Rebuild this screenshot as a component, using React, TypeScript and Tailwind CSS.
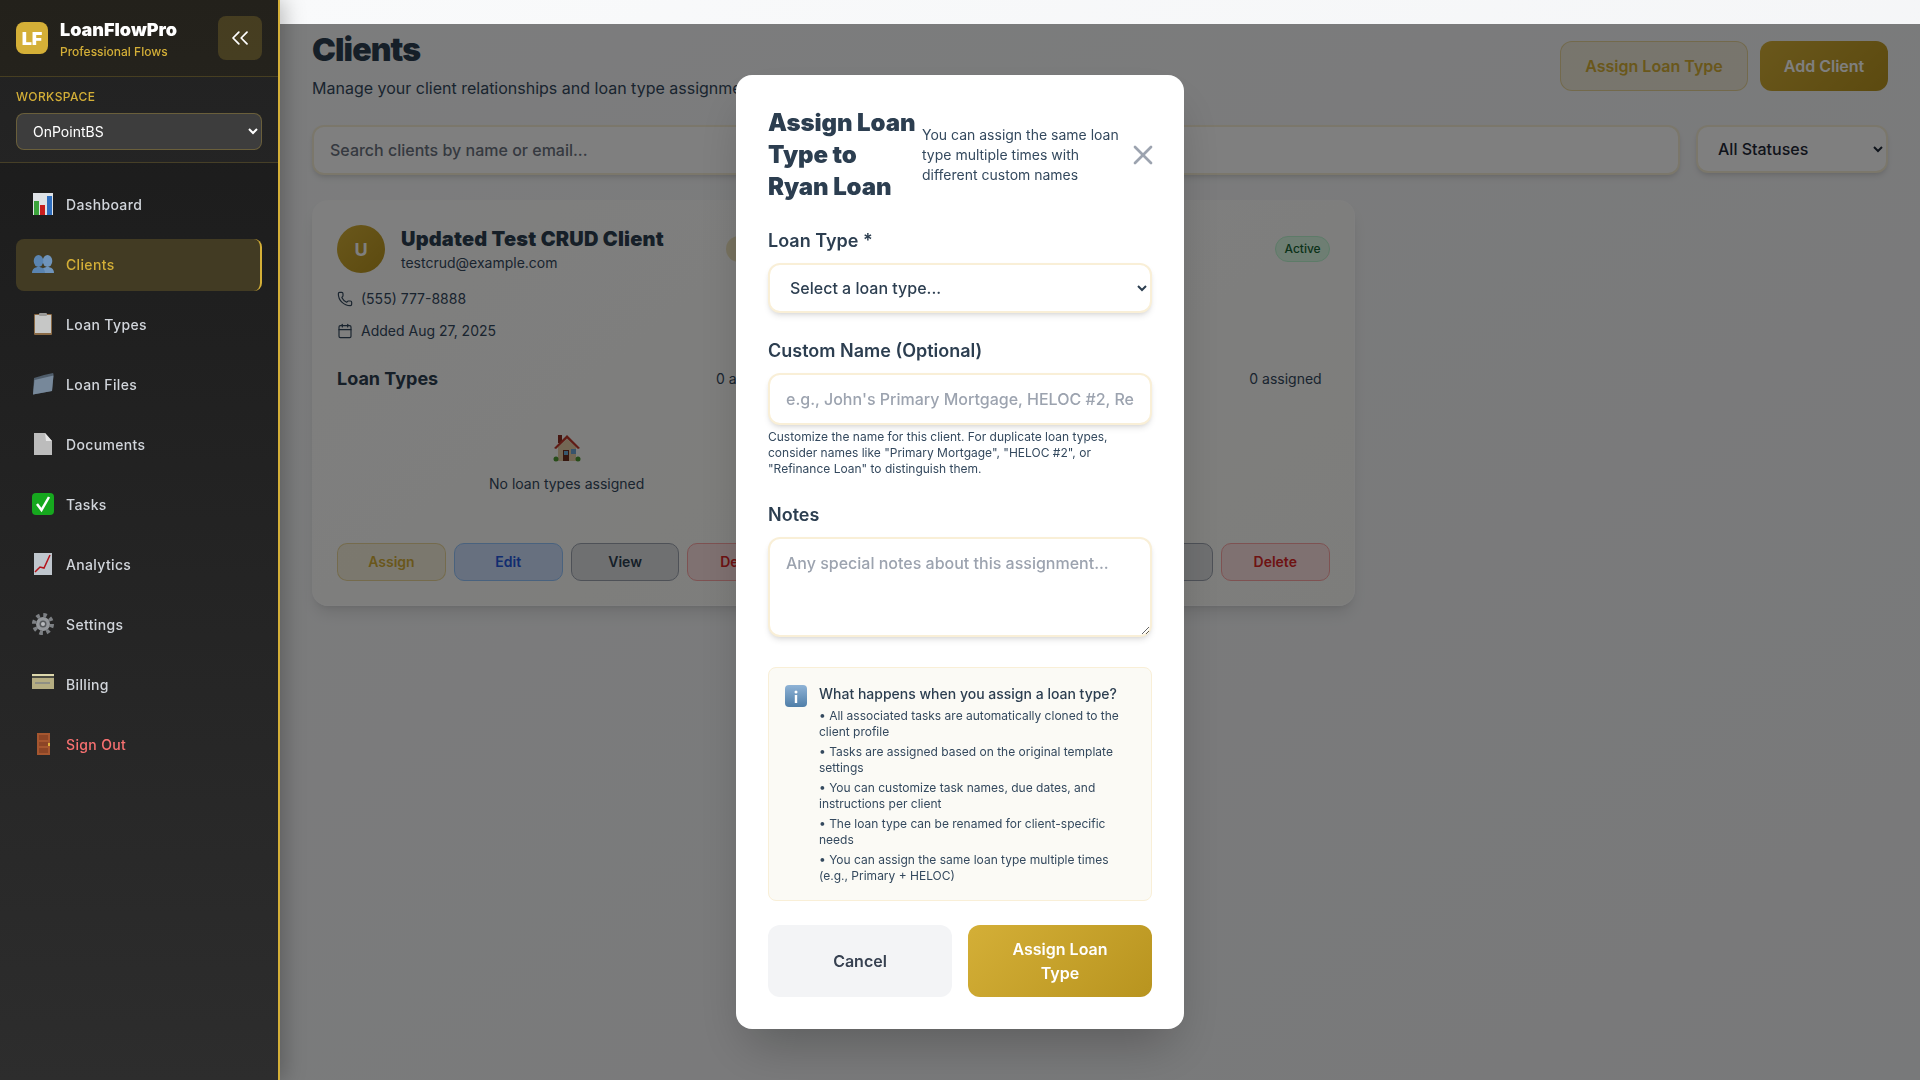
import { Calendar, ChevronsLeft, Phone, X } from 'lucide-react'
import React from 'react'

const DashboardIcon = () => (
  <svg viewBox="0 0 22 22" className="h-[22px] w-[22px]">
    <rect x="1" y="0" width="20" height="22" fill="#dfe3e7" />
    <rect x="2" y="8" width="5" height="14" fill="#3ba33b" />
    <rect x="8" y="12" width="5" height="10" fill="#c81e1e" />
    <rect x="15" y="3" width="5" height="19" fill="#2f6fc0" />
  </svg>
)

const ClientsIcon = () => (
  <svg viewBox="0 0 22 22" className="h-[22px] w-[22px]">
    <g fill="#6f94bb">
      <ellipse cx="15.5" cy="8" rx="4.8" ry="6" />
      <path d="M9 20c0-4 3-6 6.500-6s6.500 2 6.500 6z" />
    </g>
    <g fill="#5a84b0">
      <ellipse cx="6.500" cy="8" rx="4.800" ry="6" />
      <path d="M0 20c0-4 3-6 6.500-6s6.500 2 6.500 6z" />
    </g>
  </svg>
)

const ClipboardIcon = () => (
  <svg viewBox="0 0 22 22" className="h-[22px] w-[22px]">
    <rect x="2" y="1" width="18" height="21" rx="1" fill="#8a6a45" />
    <rect x="3" y="2" width="16" height="18" fill="#c6c7c6" />
    <rect x="7" y="0" width="8" height="3" rx="1" fill="#9a9a98" />
  </svg>
)

const FolderIcon = () => (
  <svg viewBox="0 0 22 22" className="h-[22px] w-[22px]">
    <path d="M2 5 L12 2 L21 0 L21.500 1 L20 18 L1 21.500 Z" fill="#4f5d6b" />
    <path d="M2.500 7 L21.500 2.500 L20 18 L1 21.500 Z" fill="#77889a" />
  </svg>
)

const DocumentIcon = () => (
  <svg viewBox="0 0 22 22" className="h-[22px] w-[22px]">
    <path d="M2 0 H13 L20 8 V22 H2 Z" fill="#bcbcbc" />
    <path d="M13 0 L20 8 H14 Z" fill="#e6e6e6" />
  </svg>
)

const CheckIcon = () => (
  <svg viewBox="0 0 22 22" className="h-[22px] w-[22px]">
    <rect x="0" y="0" width="22" height="22" rx="4" fill="#16a81e" />
    <path d="M5 11 L9.500 17 L17 4" fill="none" stroke="#fff" strokeWidth="2.500" />
  </svg>
)

const AnalyticsIcon = () => (
  <svg viewBox="0 0 22 22" className="h-[22px] w-[22px]">
    <rect x="2" y="0" width="18" height="22" fill="#bfc6cd" />
    <path d="M3 19 L8 14 L12 15 L18 2" fill="none" stroke="#b3131b" strokeWidth="1.500" />
  </svg>
)

const GearIcon = () => (
  <svg viewBox="0 0 22 22" className="h-[22px] w-[22px]">
    <circle cx="11" cy="11" r="9" fill="none" stroke="#7d8084" strokeWidth="4" strokeDasharray="3.500 3.570" />
    <circle cx="11" cy="11" r="7" fill="#94979b" />
    <circle cx="11" cy="11" r="3.500" fill="#55585b" />
    <circle cx="11" cy="11" r="2" fill="#b9bbbe" />
  </svg>
)

const BillingIcon = () => (
  <svg viewBox="0 0 22 22" className="h-[22px] w-[22px]">
    <rect x="0" y="1" width="22" height="2" fill="#ddd8ac" />
    <rect x="0" y="3" width="22" height="2" fill="#4a4a40" />
    <rect x="0" y="5" width="22" height="11" fill="#b5ad82" />
    <rect x="3" y="9" width="15" height="2" fill="#8f8f84" />
  </svg>
)

const DoorIcon = () => (
  <svg viewBox="0 0 22 22" className="h-[22px] w-[22px]">
    <rect x="5" y="0" width="13" height="22" fill="#a5562f" />
    <rect x="7" y="2" width="9" height="5" fill="#8c4526" />
    <rect x="7" y="9" width="9" height="4" fill="#8c4526" />
    <rect x="7" y="15" width="9" height="5" fill="#8c4526" />
    <rect x="16" y="10" width="2" height="3" fill="#e0b23c" />
  </svg>
)

const HouseIcon = () => (
  <svg viewBox="0 0 28 28" className="h-[28px] w-[28px]">
    <rect x="5" y="1" width="4" height="8" fill="#8c2f23" />
    <path d="M5 13 L14 5 L23 13 V27 H5 Z" fill="#e6cfa8" />
    <path d="M1 14 L14 1 L27 14 L25 15 L14 4.500 L3 15 Z" fill="#c0392b" />
    <rect x="10" y="16" width="6" height="11" fill="#6d2e1f" />
    <rect x="11" y="17" width="4" height="4" fill="#6fb1dc" />
    <rect x="18" y="15" width="5" height="5" fill="#6fa6d6" />
    <circle cx="3" cy="25" r="2.500" fill="#4f9a32" />
    <circle cx="25" cy="25" r="2.500" fill="#4f9a32" />
  </svg>
)

const InfoIcon = () => (
  <svg viewBox="0 0 22 22" className="h-[22px] w-[22px]">
    <defs>
      <linearGradient id="infoFill" x1="0" y1="0" x2="0" y2="1">
        <stop offset="0" stopColor="#8fb3d6" />
        <stop offset="1" stopColor="#4f7ea8" />
      </linearGradient>
    </defs>
    <rect width="22" height="22" rx="4" fill="url(#infoFill)" />
    <circle cx="11" cy="7" r="1.500" fill="#fff" />
    <rect x="9.800" y="10" width="2.400" height="8" fill="#fff" />
  </svg>
)

const navItems = [
  { label: 'Dashboard', icon: <DashboardIcon /> },
  { label: 'Clients', icon: <ClientsIcon />, active: true },
  { label: 'Loan Types', icon: <ClipboardIcon /> },
  { label: 'Loan Files', icon: <FolderIcon /> },
  { label: 'Documents', icon: <DocumentIcon /> },
  { label: 'Tasks', icon: <CheckIcon /> },
  { label: 'Analytics', icon: <AnalyticsIcon /> },
  { label: 'Settings', icon: <GearIcon /> },
  { label: 'Billing', icon: <BillingIcon /> },
  { label: 'Sign Out', icon: <DoorIcon />, danger: true },
]

const infoLines = [
  'All associated tasks are automatically cloned to the client profile',
  'Tasks are assigned based on the original template settings',
  'You can customize task names, due dates, and instructions per client',
  'The loan type can be renamed for client-specific needs',
  'You can assign the same loan type multiple times (e.g., Primary + HELOC)',
]

const Sidebar = () => (
  <aside className="relative z-20 flex h-screen w-[280px] shrink-0 flex-col border-r-2 border-[#d4af37] bg-gradient-to-b from-[#1a1a1a] to-[#2d2d2d] shadow-[4px_0_20px_rgba(0,0,0,0.25)]">
    <div className="flex h-[77px] items-center justify-between border-b border-[#d4af37]/20 bg-[#d4af37]/5 pl-4 pr-4">
      <div className="flex items-center gap-3">
        <div className="flex h-8 w-8 items-center justify-center rounded-lg bg-[#d4af37] text-[18px] font-black text-white">
          LF
        </div>
        <div className="pt-[2px]">
          <div className="text-[18px] leading-[24px] font-black text-white">LoanFlowPro</div>
          <div className="mt-[2px] text-[12px] leading-[16px] font-medium text-[#d4af37]">Professional Flows</div>
        </div>
      </div>
      <button className="flex h-11 w-11 items-center justify-center rounded-lg bg-[#d4af37]/20 text-white">
        <ChevronsLeft size={28} strokeWidth={1.5} />
      </button>
    </div>
    <div className="flex h-[86px] flex-col border-b border-[#d4af37]/20 bg-white/[0.03] px-4 pt-[12px]">
      <div className="mb-[8px] text-[12px] leading-[16px] font-medium tracking-[0.4px] text-[#d4af37]">WORKSPACE</div>
      <select className="h-[37px] w-full rounded-lg border border-[#d4af37]/30 bg-[#3d3d3d] px-3 text-[14px] text-white">
        <option>OnPointBS</option>
      </select>
    </div>
    <nav className="flex flex-col gap-2 px-4 pt-4">
      {navItems.map((item) => (
        <div
          key={item.label}
          className={
            item.active
              ? 'flex h-[52px] items-center gap-3 rounded-lg border-r-2 border-[#d4af37] bg-[#d4af37]/20 px-4 pb-[2px] text-[14px] font-medium tracking-[0.35px] text-[#d4af37]'
              : item.danger
                ? 'flex h-[52px] items-center gap-3 rounded-lg px-4 pb-[2px] text-[14px] font-medium tracking-[0.35px] text-[#f87171]'
                : 'flex h-[52px] items-center gap-3 rounded-lg px-4 pb-[2px] text-[14px] font-medium tracking-[0.35px] text-[#d1d5db]'
          }
        >
          {item.icon}
          <span>{item.label}</span>
        </div>
      ))}
    </nav>
  </aside>
)

const ClientCard = ({ name, email, phone, added, initial, pill }: any) => (
  <div className="rounded-2xl border border-white/60 bg-gradient-to-br from-white to-[#fbfbf7] p-6 shadow-lg">
    <div className="flex items-center justify-between">
      <div className="flex items-center gap-4">
        <div className="flex h-12 w-12 items-center justify-center rounded-full bg-[linear-gradient(135deg,#d4af37,#b8941f)] text-[18px] font-bold text-white">
          {initial}
        </div>
        <div>
          <div className="text-[20px] leading-[28px] font-black tracking-[0.2px] text-[#2c3e50]">{name}</div>
          <div className="text-[14px] leading-[20px] text-[#34495e]">{email}</div>
        </div>
      </div>
      <div className="flex items-center">
        {pill && <div className="h-[26px] w-[16px] rounded-l-full bg-[#d4af37]/30" />}
        <div className="flex h-[26px] items-center rounded-full border border-[#bbf7d0] bg-[#dcfce7] px-[8px] text-[12px] font-medium text-[#166534]">
          Active
        </div>
      </div>
    </div>
    <div className="mt-4 flex items-center gap-2 text-[14px] leading-[20px] text-[#34495e]">
      <Phone size={16} strokeWidth={1.75} />
      {phone}
    </div>
    <div className="mt-3 flex items-center gap-2 text-[14px] leading-[20px] text-[#34495e]">
      <Calendar size={16} strokeWidth={1.75} />
      {added}
    </div>
    <div className="mt-6 flex items-center justify-between pr-2">
      <div className="text-[18px] leading-[28px] font-bold text-[#2c3e50]">Loan Types</div>
      <div className="text-[14px] leading-[20px] text-[#34495e]">0 assigned</div>
    </div>
    <div className="mt-[41px] flex flex-col items-center">
      <HouseIcon />
      <div className="mt-3 text-[14px] leading-[20px] text-[#34495e]">No loan types assigned</div>
    </div>
    <div className="mt-[49px] flex gap-2 text-[14px] font-semibold">
      <button className="h-[38px] flex-1 rounded-[10px] border border-[#d4af37]/40 bg-[#d4af37]/15 pb-[1px] text-[#d4af37]">Assign</button>
      <button className="h-[38px] flex-1 rounded-[10px] border border-[#93c5fd] bg-[#cfe0ff] pb-[1px] text-[#2358e0]">Edit</button>
      <button className="h-[38px] flex-1 rounded-[10px] border border-[#9ca3af] bg-[#dfe1e3] pb-[1px] text-[#2c3e50]">View</button>
      <button className="h-[38px] flex-1 rounded-[10px] border border-[#fca5a5] bg-[#fee2e2] pb-[1px] text-[#dc2626]">Delete</button>
    </div>
  </div>
)

const Main = () => (
  <main className="min-w-0 flex-1 bg-gradient-to-br from-[#f9fafb] to-[#f1f2f4] px-8 pt-[30px]">
    <div className="flex items-center justify-between">
      <div>
        <h1 className="text-[32px] leading-[40px] font-black tracking-[-0.9px] text-[#2c3e50]">Clients</h1>
        <p className="mt-[6px] text-[16px] leading-[24px] text-[#34495e]">
          Manage your client relationships and loan type assignments
        </p>
      </div>
      <div className="mt-[2px] flex gap-3 text-[16px] font-semibold">
        <button className="h-[50px] w-[188px] rounded-xl border border-[#d4af37]/40 bg-[#d4af37]/15 text-[#d4af37]">
          Assign Loan Type
        </button>
        <button className="h-[50px] w-[128px] rounded-xl bg-[linear-gradient(135deg,#d4af37,#b8941f)] text-white">
          Add Client
        </button>
      </div>
    </div>
    <div className="mt-[25px] flex items-start gap-4">
      <input
        className="h-[50px] flex-1 rounded-xl border-2 border-[#d4af37]/20 bg-white px-4 text-[16px] font-medium shadow-md placeholder:text-[#6b7280]"
        placeholder="Search clients by name or email..."
      />
      <select className="h-[48px] w-[192px] rounded-xl border-2 border-[#d4af37]/20 bg-white px-4 text-[16px] font-medium text-[#1f2937] shadow-md">
        <option>All Statuses</option>
      </select>
    </div>
    <div className="mt-[25px] grid grid-cols-3 gap-6">
      <ClientCard
        name="Updated Test CRUD Client"
        email="testcrud@example.com"
        phone="(555) 777-8888"
        added="Added Aug 27, 2025"
        initial="U"
        pill
      />
      <ClientCard
        name="Ryan Loan"
        email="ryan@example.com"
        phone="(555) 123-4567"
        added="Added Aug 27, 2025"
        initial="R"
      />
    </div>
  </main>
)

const AssignModal = () => (
  <div className="fixed inset-x-0 top-6 bottom-0 z-10 flex items-center justify-center bg-black/50">
    <div className="w-[448px] rounded-2xl bg-white p-8 shadow-2xl">
      <div className="flex items-center justify-between">
        <div className="flex items-center gap-[6px]">
          <h2 className="w-[148px] shrink-0 text-[24px] leading-[32px] font-black tracking-[-0.1px] text-[#2c3e50]">
            Assign Loan Type to Ryan Loan
          </h2>
          <p className="text-[14px] leading-[20px] text-[#34495e]">
            You can assign the same loan type multiple times with different custom names
          </p>
        </div>
        <button className="shrink-0 text-[#9ca3af]">
          <X size={32} strokeWidth={2} className="-mr-[7px] ml-[4px]" />
        </button>
      </div>

      <label className="mt-6 mb-2 block text-[18px] leading-[28px] font-semibold text-[#2c3e50]">Loan Type *</label>
      <select className="h-[50px] w-full rounded-xl border-2 border-[#f9efd7] bg-white px-4 text-[16px] font-medium text-[#2c3e50] shadow-md">
        <option>Select a loan type...</option>
      </select>

      <label className="mt-6 mb-2 block text-[18px] leading-[28px] font-semibold text-[#2c3e50]">
        Custom Name (Optional)
      </label>
      <input
        className="h-[52px] w-full rounded-xl border-2 border-[#f9efd7] bg-white px-4 text-[16px] font-medium shadow-md placeholder:text-[#9ca3af]"
        placeholder="e.g., John's Primary Mortgage, HELOC #2, Refinance Loan"
      />
      <p className="mt-1 text-[12px] leading-[16px] text-[#34495e]">
        Customize the name for this client. For duplicate loan types, consider names like "Primary Mortgage", "HELOC
        #2", or "Refinance Loan" to distinguish them.
      </p>

      <label className="mt-6 mb-2 block text-[18px] leading-[28px] font-semibold text-[#2c3e50]">Notes</label>
      <textarea
        rows={3}
        className="block h-[100px] w-full rounded-xl border-2 border-[#f9efd7] bg-white px-4 py-3 text-[16px] font-medium shadow-md placeholder:text-[#9ca3af]"
        placeholder="Any special notes about this assignment..."
      />

      <div className="mt-[30px] flex gap-3 rounded-lg border border-[#f9efd7] bg-[#fbfaf5] px-4 pt-4 pb-[16px]">
        <div className="mt-[1px] shrink-0">
          <InfoIcon />
        </div>
        <div>
          <div className="text-[14px] leading-[20px] font-medium text-[#2c3e50]">What happens when you assign a loan type?</div>
          <ul className="mt-1 flex flex-col gap-1 text-[12px] leading-[16px] text-[#34495e]">
            {infoLines.map((line) => (
              <li key={line}>• {line}</li>
            ))}
          </ul>
        </div>
      </div>

      <div className="mt-6 flex gap-4">
        <button className="h-[72px] flex-1 rounded-xl bg-[#f3f4f6] px-6 text-[16px] font-semibold text-[#374151]">
          Cancel
        </button>
        <button className="h-[72px] flex-1 rounded-xl bg-[linear-gradient(135deg,#d4af37,#b8941f)] px-6 text-[16px] leading-[24px] font-semibold text-white">
          Assign Loan Type
        </button>
      </div>
    </div>
  </div>
)

export default function App() {
  return (
    <div className="flex h-screen overflow-hidden font-[Inter,sans-serif]">
      <Sidebar />
      <Main />
      <AssignModal />
    </div>
  )
}
